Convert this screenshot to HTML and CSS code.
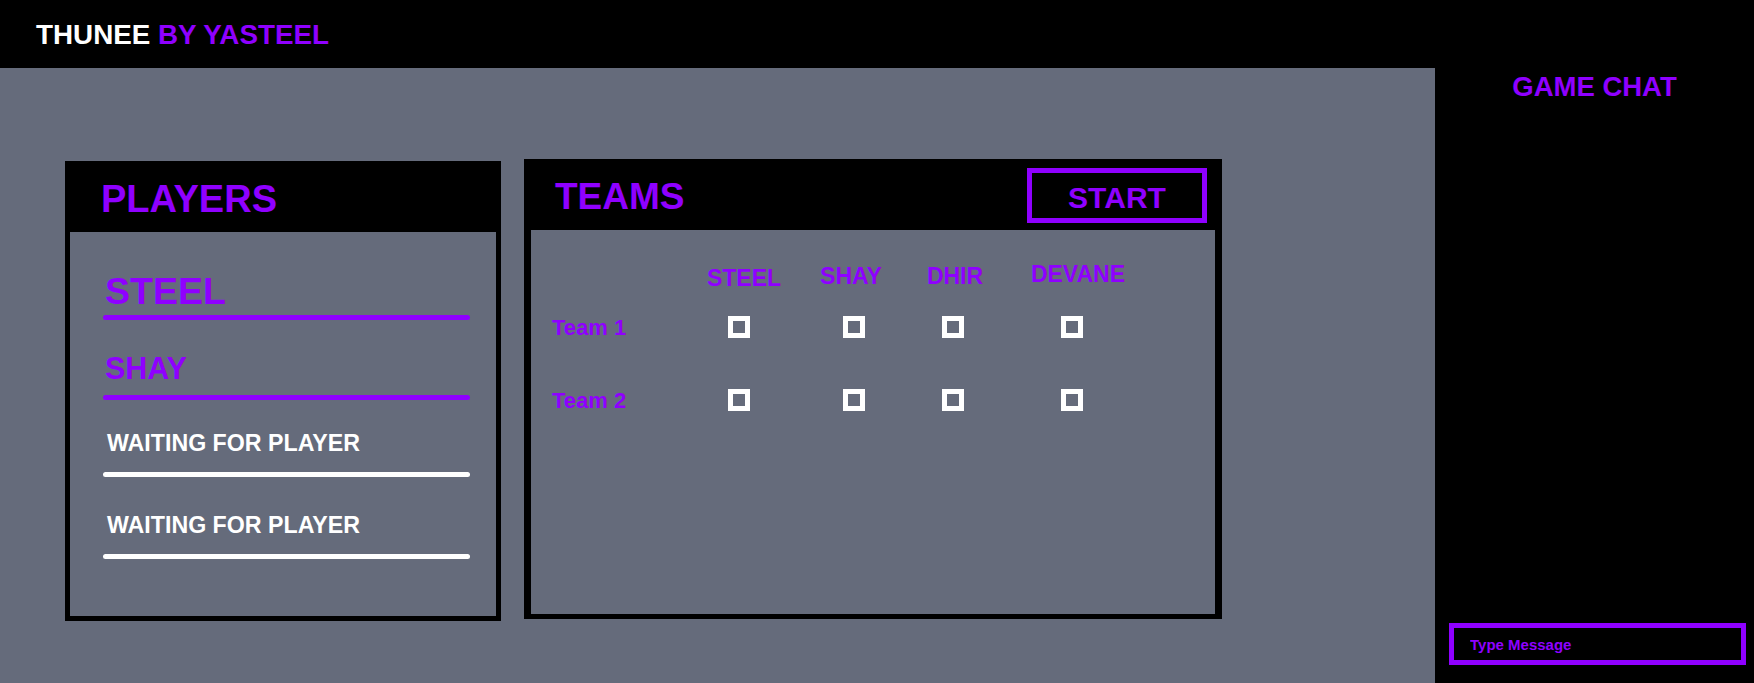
FILE: index.html
```html
<!DOCTYPE html>
<html lang="en">
<head>
<meta charset="utf-8">
<title>Thunee by Yasteel</title>
<link rel="stylesheet" href="styles.css">
</head>
<body>
<header class="topbar">
  <h1 class="brand"><span class="brand-main">THUNEE</span> <span class="brand-by">BY YASTEEL</span></h1>
</header>
<div class="layout">
  <main class="lobby">
    <section class="panel players">
      <div class="panel-head"><h2 class="panel-title">PLAYERS</h2></div>
      <div class="panel-body players-list">
        <div class="player p-lg"><div class="pname">STEEL</div><div class="pbar"></div></div>
        <div class="player p-md"><div class="pname">SHAY</div><div class="pbar"></div></div>
        <div class="player p-wait"><div class="pname">WAITING FOR PLAYER</div><div class="pbar"></div></div>
        <div class="player p-wait"><div class="pname">WAITING FOR PLAYER</div><div class="pbar"></div></div>
      </div>
    </section>
    <section class="panel teams">
      <div class="panel-head teams-head">
        <h2 class="panel-title">TEAMS</h2>
        <button class="start-btn" type="button">START</button>
      </div>
      <div class="panel-body teams-body">
        <div class="trow thead">
          <div class="tlabel"></div>
          <div class="th">STEEL</div>
          <div class="th">SHAY</div>
          <div class="th">DHIR</div>
          <div class="th">DEVANE</div>
        </div>
        <div class="trow r1">
          <div class="tlabel">Team 1</div>
          <div class="cell"><span class="box"></span></div>
          <div class="cell"><span class="box"></span></div>
          <div class="cell"><span class="box"></span></div>
          <div class="cell"><span class="box"></span></div>
        </div>
        <div class="trow r2">
          <div class="tlabel">Team 2</div>
          <div class="cell"><span class="box"></span></div>
          <div class="cell"><span class="box"></span></div>
          <div class="cell"><span class="box"></span></div>
          <div class="cell"><span class="box"></span></div>
        </div>
      </div>
    </section>
  </main>
  <aside class="chat">
    <h2 class="chat-title">GAME CHAT</h2>
    <input class="chat-input" type="text" placeholder="Type Message">
  </aside>
</div>
</body>
</html>
```
FILE: styles.css
```css
* { box-sizing: border-box; }
html, body { margin: 0; padding: 0; }
body {
  width: 1754px;
  height: 683px;
  overflow: hidden;
  background: #000;
  font-family: "Liberation Sans", Arial, sans-serif;
  font-weight: bold;
}
.topbar {
  height: 68px;
  background: #000;
  display: flex;
  align-items: center;
  padding-left: 36px;
}
.brand {
  margin: 0;
  font-size: 27.8px;
  line-height: 31px;
  font-weight: bold;
}
.brand-main { color: #fff; }
.brand-by { color: #8f00ff; }

.layout { display: flex; height: 615px; }

.lobby {
  width: 1435px;
  flex: none;
  background: #656b7b;
  display: flex;
  align-items: flex-start;
  padding: 91px 0 0 65px;
  gap: 23px;
}
.panel {
  background: #000;
  display: flex;
  flex-direction: column;
  height: 460px;
}
.players { width: 436px; padding: 5px; margin-top: 2px; }
.teams { width: 698px; padding: 5px 7px; }
.panel-head {
  height: 66px;
  flex: none;
  display: flex;
  align-items: flex-start;
}
.panel-title {
  margin: 0;
  color: #8f00ff;
  font-size: 38px;
  line-height: 66px;
  font-weight: bold;
}
.players .panel-title { padding-left: 31px; }
.teams .panel-title { padding-left: 24px; font-size: 37px; }
.panel-body { flex: 1; background: #656b7b; }

/* players list */
.players-list { padding: 39px 26px 0 33px; }
.pname {
  color: #8f00ff;
  font-size: 37.5px;
  line-height: 40px;
  padding-left: 2px;
  white-space: nowrap;
}
.pbar { height: 5px; border-radius: 3px; background: #8f00ff; }
.p-lg .pbar { margin-top: 4px; }
.p-md { margin-top: 31px; }
.p-md .pname { font-size: 30.5px; line-height: 34px; }
.p-md .pbar { margin-top: 10px; }
.p-wait { margin-top: 30px; }
.p-wait + .p-wait { margin-top: 35px; }
.p-wait .pname {
  color: #fff;
  font-size: 23.2px;
  line-height: 26px;
  padding-left: 4px;
}
.p-wait .pbar { margin-top: 16px; background: #fff; }

/* teams */
.start-btn {
  margin: 4px 8px 0 auto;
  width: 180px;
  height: 55px;
  border: 5px solid #8f00ff;
  background: #000;
  color: #8f00ff;
  font-family: "Liberation Sans", Arial, sans-serif;
  font-weight: bold;
  font-size: 30px;
  line-height: 1;
  padding: 5px 0 0;
  cursor: pointer;
}
.teams-body { padding: 23px 0 0 21px; }
.trow {
  display: grid;
  grid-template-columns: 131px 112px 118px 80px 158px;
  height: 46px;
  align-items: center;
}
.trow.r1 { margin-top: 5px; }
.trow.r2 { margin-top: 27px; }
.th {
  text-align: center;
  color: #8f00ff;
  font-size: 23px;
  line-height: 26px;
}
.th:nth-child(2) { padding: 3px 0 0 10px; }
.th:nth-child(3) { padding-right: 6px; }
.th:nth-child(4) { padding-left: 4px; }
.th:nth-child(5) { padding: 0 0 5px 12px; }
.tlabel {
  color: #8f00ff;
  font-size: 22px;
  line-height: 26px;
  padding-top: 2px;
}
.cell { display: flex; justify-content: center; }
.box {
  display: block;
  width: 22px;
  height: 22px;
  border: 5px solid #fff;
}

/* chat */
.chat {
  flex: 1;
  background: #000;
  display: flex;
  flex-direction: column;
  padding: 3px 0 18px;
}
.chat-title {
  margin: 0;
  text-align: center;
  color: #8f00ff;
  font-size: 27.5px;
  line-height: 31px;
  font-weight: bold;
}
.chat-input {
  margin: auto 8px 0 14px;
  height: 42px;
  border: 5px solid #8f00ff;
  background: #000;
  color: #8f00ff;
  padding: 0 0 0 16px;
  font-family: "Liberation Sans", Arial, sans-serif;
  font-weight: bold;
  font-size: 15px;
  outline: none;
}
.chat-input::placeholder { color: #8f00ff; opacity: 1; }
```
